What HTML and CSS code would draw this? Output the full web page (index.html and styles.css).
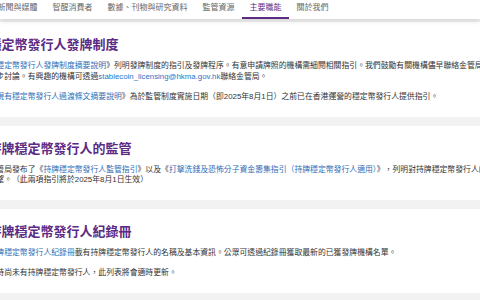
FILE: index.html
```html
<!DOCTYPE html>
<html lang="zh-Hant">
<head>
    <meta charset="UTF-8">
    <meta name="viewport" content="width=device-width, initial-scale=1.0">
    <title>穩定幣發行人</title>
    <link rel="stylesheet" href="styles.css">
</head>
<body>
    <header class="topnav">
        <ul class="menu">
            <li><a href="#">新聞與媒體</a></li>
            <li><a href="#">智醒消費者</a></li>
            <li><a href="#">數據、刊物與研究資料</a></li>
            <li><a href="#">監管資源</a></li>
            <li class="active"><a href="#">主要職能</a></li>
            <li><a href="#">關於我們</a></li>
        </ul>
    </header>

    <main class="page">
        <section class="card">
            <h2>穩定幣發行人發牌制度</h2>
            <p>《<a href="#">穩定幣發行人發牌制度摘要說明</a>》列明發牌制度的指引及發牌程序。有意申請牌照的機構需細閱相關指引。我們鼓勵有關機構儘早聯絡金管局，以便進行初步討論。有興趣的機構可透過<a href="#" class="mail">stablecoin_licensing@hkma.gov.hk</a>聯絡金管局。</p>
            <p>《<a href="#">現有穩定幣發行人過渡條文摘要說明</a>》為於監管制度實施日期（即2025年8月1日）之前已在香港運營的穩定幣發行人提供指引。</p>
        </section>

        <section class="card">
            <h2>持牌穩定幣發行人的監管</h2>
            <p>金管局發布了《<a href="#">持牌穩定幣發行人監管指引</a>》以及《<a href="#">打擊洗錢及恐怖分子資金籌集指引（持牌穩定幣發行人適用）</a>》，列明對持牌穩定幣發行人的監管要求及期望。（此兩項指引將於2025年8月1日生效）</p>
        </section>

        <section class="card">
            <h2>持牌穩定幣發行人紀錄冊</h2>
            <p><a href="#">持牌穩定幣發行人紀錄冊</a>載有持牌穩定幣發行人的名稱及基本資訊。公眾可透過紀錄冊獲取最新的已獲發牌機構名單。</p>
            <p>暫時尚未有持牌穩定幣發行人，此列表將會適時更新。</p>
        </section>
    </main>
</body>
</html>
```

FILE: styles.css
```css
* {
    margin: 0;
    padding: 0;
    box-sizing: border-box;
    font-family: "Liberation Sans", "Noto Sans CJK TC", sans-serif;
}

body {
    width: 100%;
    height: 100vh;
    overflow: hidden;
    background: #f2f2f2;
}

.topnav {
    position: relative;
    z-index: 1;
    background: #ffffff;
    box-shadow: 0px 2px 5px rgba(0, 0, 0, 0.13);
}

.menu {
    display: flex;
    list-style: none;
    margin-left: -10px;
}

.menu li a {
    display: block;
    padding: 2px 7.5px 6px;
    font-size: 8px;
    line-height: 11px;
    color: #666666;
    text-decoration: none;
    white-space: nowrap;
}

.menu li.active a {
    color: #5c2b84;
    box-shadow: inset 0 -2px 0 #5c2b84;
}

.page {
    width: 600px;
    margin-left: -30px;
    padding-top: 3px;
    display: flex;
    flex-direction: column;
    gap: 9px;
}

.card {
    background: #ffffff;
    padding: 14px 44px 4px 18.5px;
}

.card h2 {
    font-size: 13px;
    line-height: 17px;
    font-weight: 700;
    color: #5c2b84;
    margin-bottom: 8px;
}

.card p {
    font-size: 7.85px;
    line-height: 10.5px;
    color: #333333;
    margin-bottom: 10px;
}

.card p a {
    color: #2f6db5;
    text-decoration: none;
}

.card p a.mail {
    color: #2b74c9;
}
```
